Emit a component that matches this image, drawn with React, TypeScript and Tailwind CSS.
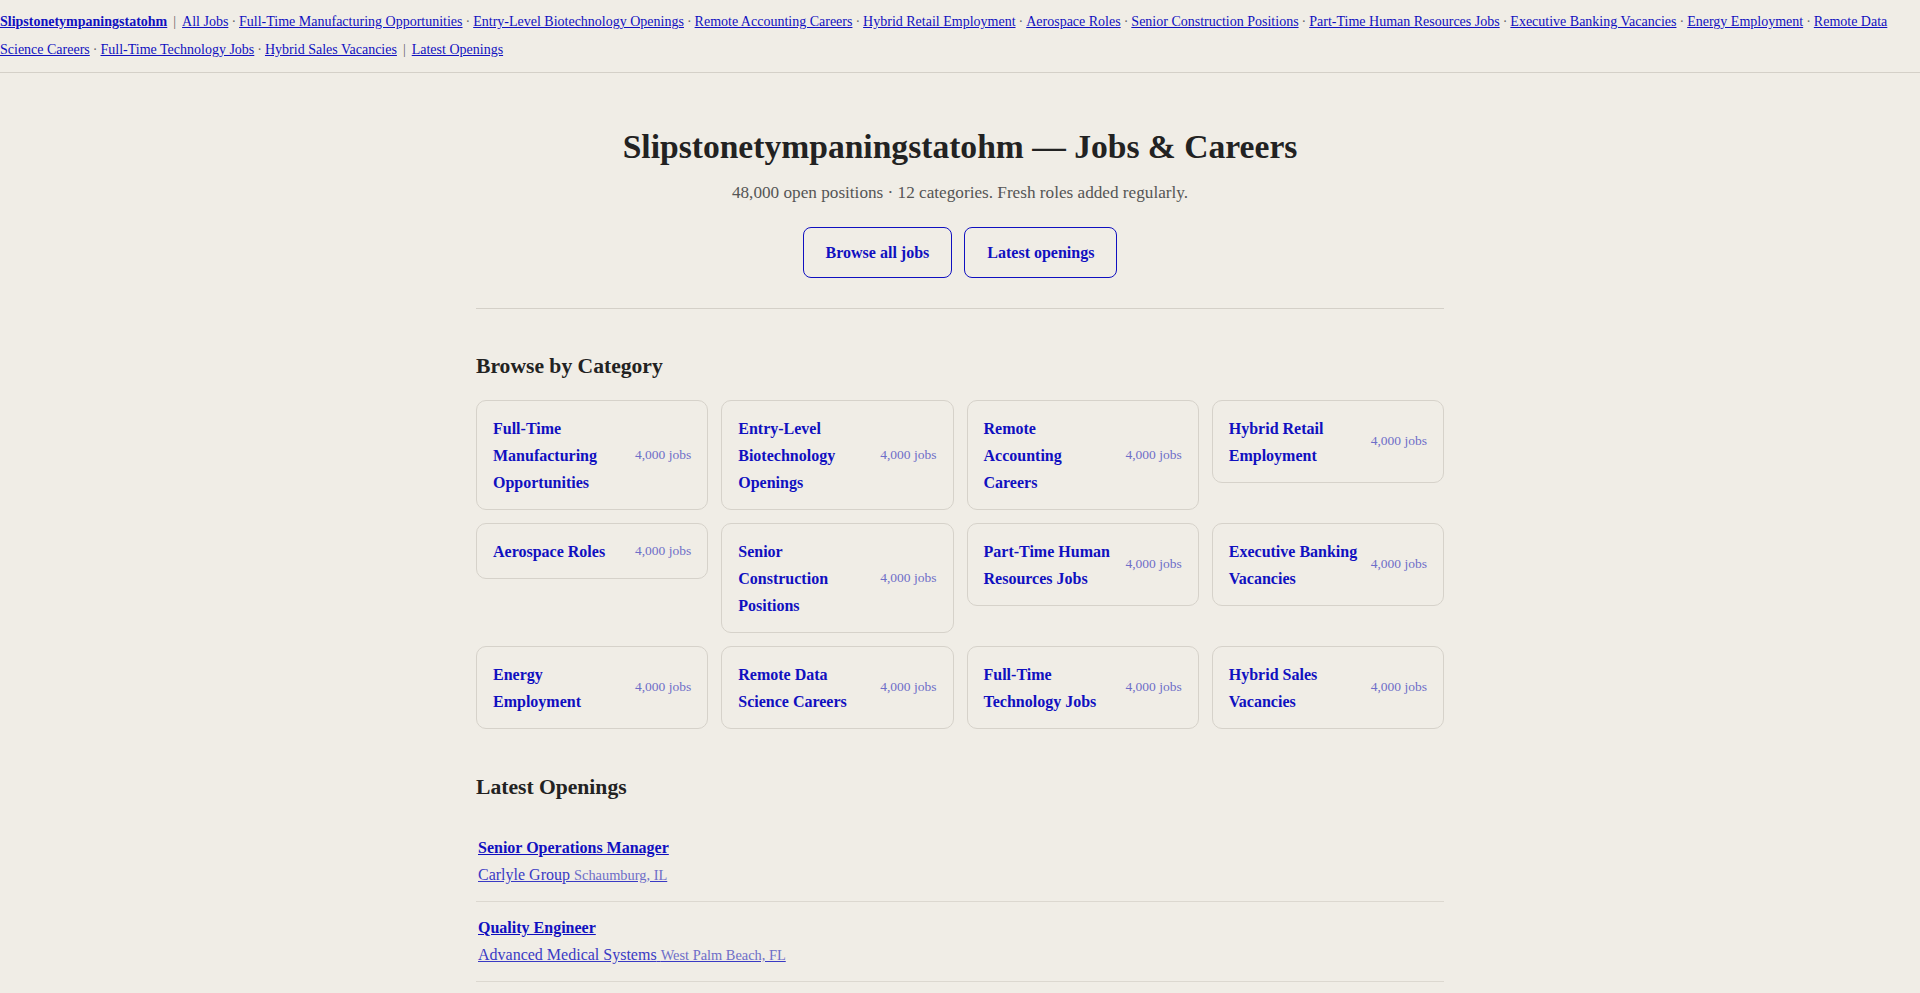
import React from "react";

const categories = [
  "Full-Time Manufacturing Opportunities",
  "Entry-Level Biotechnology Openings",
  "Remote Accounting Careers",
  "Hybrid Retail Employment",
  "Aerospace Roles",
  "Senior Construction Positions",
  "Part-Time Human Resources Jobs",
  "Executive Banking Vacancies",
  "Energy Employment",
  "Remote Data Science Careers",
  "Full-Time Technology Jobs",
  "Hybrid Sales Vacancies",
];

const jobs = [
  { title: "Senior Operations Manager", company: "Carlyle Group", loc: "Schaumburg, IL" },
  { title: "Quality Engineer", company: "Advanced Medical Systems", loc: "West Palm Beach, FL" },
  { title: "Staff Accountant", company: "Northwind Partners", loc: "Austin, TX" },
];

export default function App() {
  return (
    <div
      className="min-h-screen bg-[#f0ede6] text-[#222]"
      style={{ fontFamily: '"Liberation Serif", "Times New Roman", serif' }}
    >
      <nav className="border-b border-[#d4d0c8] py-[8px] text-[14px] leading-[28px] text-[#666]">
        <a href="#" className="font-bold text-[#1010c0] underline">Slipstonetympaningstatohm</a>
        <span className="mx-[6px]">|</span>
        <a href="#" className="text-[#1010c0] underline">All Jobs</a>
        {categories.map((c) => (
          <React.Fragment key={c}>
            <span className="mx-[3px]">·</span>
            <a href="#" className="text-[#1010c0] underline">{c}</a>
          </React.Fragment>
        ))}
        <span className="mx-[6px]">|</span>
        <a href="#" className="text-[#1010c0] underline">Latest Openings</a>
      </nav>

      <main className="mx-auto max-w-[1000px] px-4">
        <section className="flex flex-col items-center pt-[54px] pb-[30px] border-b border-[#d4d0c8]">
          <h1 className="text-[33.6px] font-bold leading-[40px] text-[#222]">
            Slipstonetympaningstatohm — Jobs &amp; Careers
          </h1>
          <p className="mt-[13px] text-[17.2px] leading-[26px] text-[#555]">
            48,000 open positions · 12 categories. Fresh roles added regularly.
          </p>
          <div className="mt-[21px] flex gap-[12px]">
            <a href="#" className="rounded-[8px] border border-[#1010c0] px-[22px] py-[13.5px] text-[16px] font-bold leading-[22px] text-[#1010c0]">
              Browse all jobs
            </a>
            <a href="#" className="rounded-[8px] border border-[#1010c0] px-[22px] py-[13.5px] text-[16px] font-bold leading-[22px] text-[#1010c0]">
              Latest openings
            </a>
          </div>
        </section>

        <section className="pt-[42px]">
          <h2 className="text-[21.6px] font-bold leading-[30px] text-[#222]">Browse by Category</h2>
          <div className="mt-[19px] grid grid-cols-4 items-start gap-[13px]">
            {categories.map((c) => (
              <a
                key={c}
                href="#"
                className="flex items-center justify-between gap-[11px] rounded-[10px] border border-[#d6d2ca] px-4 py-[13.5px]"
              >
                <span className="text-[16px] font-bold leading-[27px] text-[#1010c0]">{c}</span>
                <span className="shrink-0 whitespace-nowrap text-[13.5px] text-[#6e6ec8]">4,000 jobs</span>
              </a>
            ))}
          </div>
        </section>

        <section className="pt-[43px] pb-10">
          <h2 className="text-[21.6px] font-bold leading-[30px] text-[#222]">Latest Openings</h2>
          <ul className="mt-[20px]">
            {jobs.map((j) => (
              <li key={j.title} className="border-b border-[#dcd8d0] px-[2px] py-[14px]">
                <a href="#" className="block text-[16px] font-bold leading-[24px] text-[#1010c0] underline">
                  {j.title}
                </a>
                <a href="#" className="mt-[3px] block leading-[24px] text-[#3a3ac4] underline">
                  <span className="text-[16px]">{j.company}</span>{" "}
                  <span className="text-[14.4px] text-[#6e6ec8]">{j.loc}</span>
                </a>
              </li>
            ))}
          </ul>
        </section>
      </main>
    </div>
  );
}
